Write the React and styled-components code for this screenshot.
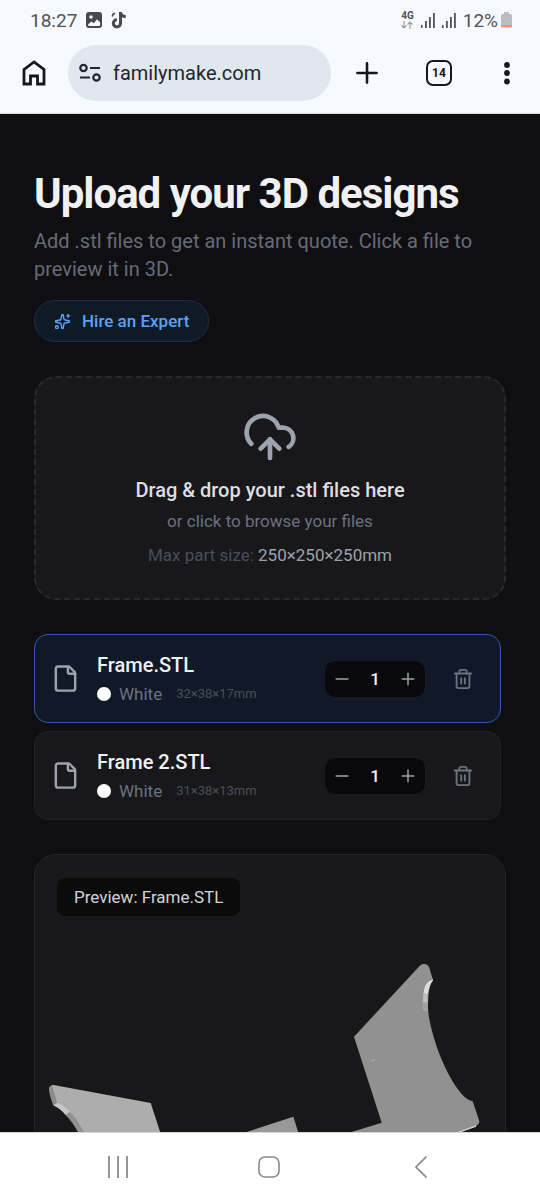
import React, { useState } from 'react';

import styled, { createGlobalStyle } from 'styled-components';

import { CloudUpload, File, Minus, Plus, Sparkles, Trash2 } from 'lucide-react';

const GlobalStyle = createGlobalStyle`
  * {
    box-sizing: border-box;
  }
  body {
    margin: 0;
    background: #0f0f11;
    font-family: Roboto, "Liberation Sans", sans-serif;
  }
  h1, p, ul {
    margin: 0;
    padding: 0;
  }
  button, input {
    margin: 0;
    padding: 0;
    border: 0;
    background: none;
    color: inherit;
    font: inherit;
  }
  button {
    cursor: pointer;
  }
  svg {
    display: block;
    flex: none;
  }
`;

const Screen = styled.div`
  display: flex;
  flex-direction: column;
  height: 100vh;
`;

const StatusBar = styled.div`
  display: flex;
  flex: none;
  align-items: center;
  justify-content: space-between;
  height: 40px;
  padding: 0 28px 0 30px;
  background: #f6f9fe;
  color: #505358;
  font-size: 19px;
`;

const StatusGroup = styled.div`
  display: flex;
  align-items: center;
  gap: ${ ({ $gap }) => $gap }px;
`;

const Network = styled.div`
  display: flex;
  flex-direction: column;
  align-items: center;
  font-size: 10px;
  font-weight: 700;
  line-height: 10px;
`;

const Toolbar = styled.div`
  display: flex;
  flex: none;
  align-items: center;
  height: 74px;
  padding: 5px 1px 13px 22px;
  border-bottom: 1px solid #d5d8dd;
  background: #f6f9fe;
  color: #14171b;
`;

const Address = styled.label`
  display: flex;
  flex: 1;
  align-items: center;
  gap: 12px;
  min-width: 0;
  height: 56px;
  margin-left: 22px;
  padding: 0 11px;
  border-radius: 28px;
  background: #e1e7ef;
`;

const AddressInput = styled.input`
  flex: 1;
  min-width: 0;
  outline: none;
  color: #22262c;
  font-size: 20px;
`;

const ToolbarActions = styled.div`
  display: grid;
  grid-template-columns: 72px 72px 64px;
`;

const IconButton = styled.button`
  display: flex;
  align-items: center;
  justify-content: center;
`;

const TabCount = styled.span`
  display: flex;
  align-items: center;
  justify-content: center;
  width: 26px;
  height: 26px;
  border: 2px solid #14171b;
  border-radius: 7px;
  font-size: 12px;
  font-weight: 700;
`;

const Page = styled.main`
  flex: 1;
  min-height: 0;
  overflow-y: auto;
  padding: 55px 34px;
  background: #0f0f11;
  scrollbar-width: none;
`;

const Title = styled.h1`
  color: #f1f1f3;
  font-size: 42px;
  font-weight: 700;
  line-height: 50px;
  letter-spacing: -1px;
`;

const Lead = styled.p`
  margin-top: 8px;
  color: #676b79;
  font-size: 20px;
  line-height: 28px;
`;

const ExpertButton = styled.button`
  display: flex;
  align-items: center;
  gap: 11px;
  height: 42px;
  margin-top: 17px;
  padding: 0 19px;
  border: 1px solid #1a2f4e;
  border-radius: 21px;
  background: #101926;
  color: #5aa2f8;
  font-size: 17px;
  font-weight: 500;
`;

const DropZone = styled.label`
  display: flex;
  flex-direction: column;
  align-items: center;
  margin-top: 34px;
  padding: 31px;
  border: 2px dashed #2a2a2d;
  border-radius: 22px;
  background: #18181a;
  color: #9ca3af;
  cursor: pointer;
`;

const FileInput = styled.input`
  display: none;
`;

const DropTitle = styled.p`
  margin-top: 11px;
  color: #dddfe3;
  font-size: 20px;
  font-weight: 500;
  line-height: 28px;
`;

const DropText = styled.p`
  margin-top: ${ ({ $top }) => $top }px;
  color: ${ ({ $dim }) => $dim ? '#484e5a' : '#6b7280' };
  font-size: 17px;
  line-height: 24px;
`;

const Limit = styled.span`
  color: #9ca3af;
`;

const FileList = styled.ul`
  display: flex;
  flex-direction: column;
  gap: 8px;
  margin-top: 34px;
  padding-right: 5px;
  list-style: none;
`;

const FileRow = styled.li`
  display: flex;
  align-items: center;
  height: 89px;
  padding: 0 26px 0 16px;
  border: 1px solid ${ ({ $selected }) => $selected ? '#2e5ca6' : '#232326' };
  border-radius: 14px;
  background: ${ ({ $selected }) => $selected ? '#111827' : '#18181a' };
  color: #9ca3af;
`;

const FileButton = styled.button`
  display: flex;
  flex: 1;
  align-items: center;
  gap: 17px;
  min-width: 0;
  text-align: left;
`;

const FileName = styled.p`
  color: #f0f1f3;
  font-size: 20px;
  font-weight: 500;
  line-height: 28px;
`;

const FileMeta = styled.p`
  display: flex;
  align-items: center;
  margin-top: 3px;
  color: #6b7280;
  font-size: 17px;
  line-height: 24px;
`;

const Swatch = styled.span`
  width: 14px;
  height: 14px;
  margin-right: 8px;
  border-radius: 50%;
  background: ${ ({ $color }) => $color };
`;

const Dimensions = styled.span`
  margin-left: 14px;
  color: #484e5a;
  font-size: 13px;
`;

const Stepper = styled.div`
  display: grid;
  grid-template-columns: 34px 1fr 34px;
  align-items: center;
  width: 102px;
  height: 38px;
  border: 1px solid #1b1b1e;
  border-radius: 11px;
  background: #09090b;
`;

const Quantity = styled.output`
  color: #f3f4f6;
  font-size: 17px;
  font-weight: 500;
  text-align: center;
`;

const DeleteButton = styled(IconButton)`
  margin-left: 26px;
  color: #6b7280;
`;

const PreviewPanel = styled.section`
  position: relative;
  height: 480px;
  margin-top: 34px;
  overflow: hidden;
  border: 1px solid #252528;
  border-radius: 22px;
  background: #18181a;
`;

const PreviewLabel = styled.p`
  position: absolute;
  top: 23px;
  left: 22px;
  padding: 7px 17px;
  border-radius: 8px;
  background: #0b0b0c;
  color: #d1d5db;
  font-size: 17px;
  line-height: 24px;
`;

const SystemNav = styled.nav`
  display: grid;
  flex: none;
  grid-template-columns: repeat(3, 1fr);
  height: 68px;
  padding: 0 43px 0 42px;
  border-top: 1px solid #d8d8d8;
  background: #fff;
`;

const GalleryIcon = () => (
  <svg width="16" height="16" viewBox="0 0 16 16">
    <rect width="16" height="16" rx="3" fill="#46494e" />
    <circle cx="5" cy="5" r="1.7" fill="#f6f9fe" />
    <path d="M2 12.500l3.500-3 2.300 1.700 3.300-4 3 3.200v2.300a1.300 1.300 0 0 1-1.300 1.300H3.200A1.300 1.300 0 0 1 2 12.500z" fill="#f6f9fe" />
  </svg>
);

const NoteIcon = () => (
  <svg width="16" height="17" viewBox="0 0 16 17" fill="none" stroke="#46494e" strokeWidth="3">
    <path d="M9.500 0v11.300a3.600 3.600 0 1 1-3.600-3.600" />
    <path d="M9.500 1c.6 2.400 2.500 3.500 5.200 3.700" />
    <path d="M1.200 4.500l1-2.500M2 2.300l2-1" strokeWidth="1.800" />
  </svg>
);

const ArrowsIcon = () => (
  <svg width="12" height="8" viewBox="0 0 12 8" fill="none" stroke="#9b9ea3" strokeWidth="1.200">
    <path d="M3 0v7M.5 4.500L3 7l2.500-2.500M9 8V1M6.500 3.500L9 1l2.500 2.500" />
  </svg>
);

const SignalIcon = () => (
  <svg width="14" height="15" viewBox="0 0 14 15" fill="#505358">
    <rect x="0" y="12" width="1.600" height="3" />
    <rect x="4" y="8" width="1.800" height="7" />
    <rect x="8" y="4" width="1.800" height="11" />
    <rect x="12" y="0" width="1.800" height="15" />
  </svg>
);

const BatteryIcon = () => (
  <svg width="11" height="16" viewBox="0 0 11 16">
    <path d="M3 0h5v2h1.500A1.500 1.500 0 0 1 11 3.500V13H0V3.500A1.500 1.500 0 0 1 1.500 2H3z" fill="#b9bcc2" />
    <path d="M0 13h11v1a1.500 1.500 0 0 1-1.500 1.500h-8A1.500 1.500 0 0 1 0 14z" fill="#ec8f7c" />
  </svg>
);

const HomeIcon = () => (
  <svg width="24" height="26" viewBox="0 0 24 26" fill="none" stroke="#14171b" strokeWidth="2.800">
    <path d="M2 9.500L12 2l10 7.500V24h-6.500v-8h-7v8H2z" />
  </svg>
);

const SiteIcon = () => (
  <svg width="22" height="20" viewBox="0 0 22 20" fill="none" stroke="#22262c" strokeWidth="2.200">
    <circle cx="4.500" cy="5" r="3.200" />
    <path d="M11 5h10M1 14.500h10" />
    <circle cx="17.500" cy="14.500" r="3.200" />
  </svg>
);

const PlusIcon = () => (
  <svg width="22" height="22" viewBox="0 0 22 22" stroke="#14171b" strokeWidth="2.600" strokeLinecap="round">
    <path d="M11 1.400v19.200M1.400 11h19.200" />
  </svg>
);

const MenuIcon = () => (
  <svg width="6" height="24" viewBox="0 0 6 24" fill="#14171b">
    <circle cx="3" cy="4" r="2.900" />
    <circle cx="3" cy="12" r="2.900" />
    <circle cx="3" cy="20.500" r="2.900" />
  </svg>
);

const Model = () => (
  <svg width="100%" viewBox="35 855 470 470" role="img" aria-label="3D model">
    {/* left arm */}
    <path d="M49 1088.500Q50 1085 53.500 1085L150.700 1103L166 1150L86 1150Q74 1116 53.300 1105z" fill="#adadad" />
    <path d="M49 1088.500Q49.500 1086 52 1085.500L57.300 1103L53.300 1105.500Q49 1094 49 1088.500z" fill="#8b8b8b" />
    <path d="M53.300 1105.500L57.300 1103Q62 1103.500 70 1112L65.500 1115Q60 1107.500 53.300 1105.500z" fill="#c7c7c7" />
    <path d="M65.500 1115L70 1112Q78 1120 84.500 1133L92 1150H86L78.300 1132Q72 1121 65.500 1115z" fill="#919191" />
    {/* centre and right arm */}
    <path d="M246.700 1132L293.300 1116.700L304 1150H240z" fill="#989898" />
    <path d="M354 1036.700L420.500 965Q422.500 963.500 425 964Q428 964.500 429 967L433 980Q428 986 428 1008Q428.500 1022 436.700 1046.700C443 1065 452 1081 457 1088Q465 1100 472.700 1101.300L479.300 1121Q479.500 1124.500 476 1126L456.700 1132.500L400 1150H340L351.700 1132L381.700 1122.700z" fill="#919191" />
    <path d="M433 979.500Q425 981 423.500 993L427.500 994.500Q429 985 433 980.500z" fill="#dedede" />
    <path d="M423.500 993L427.500 994.500L427.500 1003L422.700 1002z" fill="#c0c0c0" />
    <path d="M422.700 1002L427.500 1003L428 1011H422.700z" fill="#a3a3a3" />
    <path d="M476 1126L456.700 1133" stroke="#d0d0d0" strokeWidth="1.400" />
    <path d="M371.500 1060.500l1.500.5 2.500-1.800" fill="none" stroke="#b5b5b5" />
  </svg>
);

const initialFiles = [
  { name: 'Frame.STL', color: 'White', size: '32×38×17mm', quantity: 1 },
  { name: 'Frame 2.STL', color: 'White', size: '31×38×13mm', quantity: 1 },
];

export default function App() {
  const [files, setFiles] = useState(initialFiles);
  const [selected, setSelected] = useState('Frame.STL');

  const changeQuantity = (name, step) => {
    setFiles(files.map(file => file.name === name
      ? { ...file, quantity: Math.max(1, file.quantity + step) }
      : file));
  };

  const removeFile = name => setFiles(files.filter(file => file.name !== name));

  return (<Screen>
    <GlobalStyle />
    <StatusBar>
      <StatusGroup $gap={ 9 }>
        <span>18:27</span>
        <GalleryIcon />
        <NoteIcon />
      </StatusGroup>
      <StatusGroup $gap={ 7 }>
        <Network>
          4G
          <ArrowsIcon />
        </Network>
        <SignalIcon />
        <SignalIcon />
        <StatusGroup $gap={ 3 }>
          <span>12%</span>
          <BatteryIcon />
        </StatusGroup>
      </StatusGroup>
    </StatusBar>
    <Toolbar>
      <IconButton aria-label="Home"><HomeIcon /></IconButton>
      <Address>
        <SiteIcon />
        <AddressInput aria-label="Address" defaultValue="familymake.com" />
      </Address>
      <ToolbarActions>
        <IconButton aria-label="New tab"><PlusIcon /></IconButton>
        <IconButton aria-label="Tabs"><TabCount>14</TabCount></IconButton>
        <IconButton aria-label="Menu"><MenuIcon /></IconButton>
      </ToolbarActions>
    </Toolbar>

    <Page>
      <Title>Upload your 3D designs</Title>
      <Lead>Add .stl files to get an instant quote. Click a file to preview it in 3D.</Lead>
      <ExpertButton>
        <Sparkles size={ 17 } />
        Hire an Expert
      </ExpertButton>

      <DropZone>
        <FileInput type="file" accept=".stl" multiple />
        <CloudUpload size={ 56 } />
        <DropTitle>Drag &amp; drop your .stl files here</DropTitle>
        <DropText $top={ 5 }>or click to browse your files</DropText>
        <DropText $top={ 10 } $dim>Max part size: <Limit>250×250×250mm</Limit></DropText>
      </DropZone>

      <FileList>
        { files.map(file => (
          <FileRow key={ file.name } $selected={ file.name === selected }>
            <FileButton onClick={ () => setSelected(file.name) }>
              <File size={ 29 } />
              <div>
                <FileName>{ file.name }</FileName>
                <FileMeta>
                  <Swatch $color="#fff" />
                  { file.color }
                  <Dimensions>{ file.size }</Dimensions>
                </FileMeta>
              </div>
            </FileButton>
            <Stepper>
              <IconButton aria-label="Decrease" onClick={ () => changeQuantity(file.name, -1) }>
                <Minus size={ 20 } strokeWidth={ 1.75 } />
              </IconButton>
              <Quantity>{ file.quantity }</Quantity>
              <IconButton aria-label="Increase" onClick={ () => changeQuantity(file.name, 1) }>
                <Plus size={ 20 } strokeWidth={ 1.75 } />
              </IconButton>
            </Stepper>
            <DeleteButton aria-label="Delete" onClick={ () => removeFile(file.name) }>
              <Trash2 size={ 22 } />
            </DeleteButton>
          </FileRow>
        )) }
      </FileList>

      <PreviewPanel>
        <Model />
        <PreviewLabel>Preview: { selected }</PreviewLabel>
      </PreviewPanel>
    </Page>

    <SystemNav>
      <IconButton aria-label="Recent apps">
        <svg width="22" height="22" viewBox="0 0 22 22" stroke="#8a8a8a" strokeWidth="1.800">
          <path d="M2 0v22M11 0v22M20 0v22" />
        </svg>
      </IconButton>
      <IconButton aria-label="Home screen">
        <svg width="22" height="22" viewBox="0 0 22 22" fill="none" stroke="#8a8a8a" strokeWidth="1.600">
          <rect x="1" y="1" width="20" height="20" rx="6" />
        </svg>
      </IconButton>
      <IconButton aria-label="Back">
        <svg width="12" height="22" viewBox="0 0 12 22" fill="none" stroke="#8a8a8a" strokeWidth="1.600">
          <path d="M11.500.5L1 11l10.500 10.500" />
        </svg>
      </IconButton>
    </SystemNav>
  </Screen>)
}
